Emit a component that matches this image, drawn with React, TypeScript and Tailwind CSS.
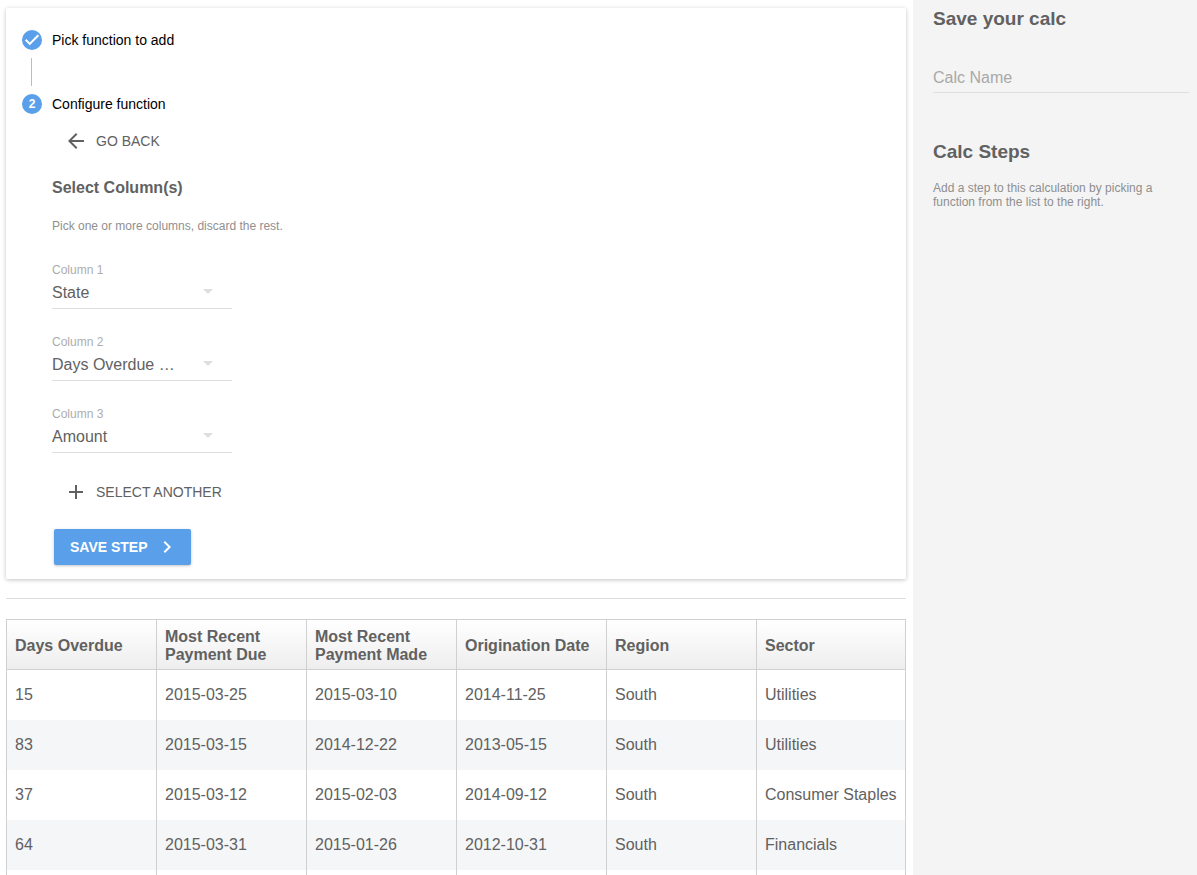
import { useState } from 'react';

const columnOptions = ['State', 'Days Overdue …', 'Amount', 'Region', 'Sector'];

const headers = [
  'Days Overdue',
  'Most Recent Payment Due',
  'Most Recent Payment Made',
  'Origination Date',
  'Region',
  'Sector',
];

const rows = [
  ['15', '2015-03-25', '2015-03-10', '2014-11-25', 'South', 'Utilities'],
  ['83', '2015-03-15', '2014-12-22', '2013-05-15', 'South', 'Utilities'],
  ['37', '2015-03-12', '2015-02-03', '2014-09-12', 'South', 'Consumer Staples'],
  ['64', '2015-03-31', '2015-01-26', '2012-10-31', 'South', 'Financials'],
  ['', '', '', '', '', ''],
];

function Icon({ path, className = 'size-6' }: { path: string; className?: string }) {
  return (
    <svg viewBox="0 0 24 24" fill="currentColor" className={className} aria-hidden="true">
      <path d={path} />
    </svg>
  );
}

interface ColumnSelectProps {
  index: number;
  value: string;
  onChange: (value: string) => void;
}

function ColumnSelect({ index, value, onChange }: ColumnSelectProps) {
  const id = `column-${index + 1}`;
  return (
    <div className="w-[180px]">
      <label htmlFor={id} className="block text-xs leading-4 text-[#adadad]">
        Column {index + 1}
      </label>
      <div className="relative mt-px">
        <select
          id={id}
          value={value}
          onChange={(e) => onChange(e.target.value)}
          className="block h-[30px] w-full appearance-none truncate border-b border-[#dedede] bg-transparent pt-0.5 pr-12 pb-[3px] text-base leading-6 text-[#616161] outline-none"
        >
          {columnOptions.map((option) => (
            <option key={option}>{option}</option>
          ))}
        </select>
        <Icon
          path="M7 10l5 5 5-5z"
          className="pointer-events-none absolute top-0 right-3 size-6 text-[#dedede]"
        />
      </div>
    </div>
  );
}

function StepConfig() {
  const [columns, setColumns] = useState(['State', 'Days Overdue …', 'Amount']);

  const updateColumn = (index: number, value: string) => {
    setColumns(columns.map((c, i) => (i === index ? value : c)));
  };

  return (
    <div className="flex flex-col items-start pl-[30px]">
      <button type="button" className="mt-[9px] flex h-9 items-center gap-2 px-3 text-sm text-[#616161]">
        <Icon path="M20 11H7.83l5.59-5.59L12 4l-8 8 8 8 1.41-1.41L7.83 13H20v-2z" />
        GO BACK
      </button>

      <h2 className="mt-[17px] text-base leading-6 font-bold text-[#616161]">Select Column(s)</h2>
      <p className="mt-[18px] text-xs leading-4 text-[#8f8f8f]">
        Pick one or more columns, discard the rest.
      </p>

      <div className="mt-7 flex flex-col gap-[25px]">
        {columns.map((column, i) => (
          <ColumnSelect key={i} index={i} value={column} onChange={(v) => updateColumn(i, v)} />
        ))}
      </div>

      <button
        type="button"
        onClick={() => setColumns([...columns, 'State'])}
        className="mt-[21px] flex h-9 items-center gap-2 px-3 text-sm text-[#616161]"
      >
        <Icon path="M19 13h-6v6h-2v-6H5v-2h6V5h2v6h6v2z" />
        SELECT ANOTHER
      </button>

      <button
        type="button"
        className="mt-[19px] ml-0.5 flex h-9 items-center gap-[7px] rounded-xs bg-[#5a9fe9] pr-3 pl-4 text-sm font-bold text-white shadow-[0_1px_3px_rgba(0,0,0,0.24)]"
      >
        SAVE STEP
        <Icon path="M10 6L8.59 7.41 13.17 12l-4.58 4.59L10 18l6-6z" />
      </button>
    </div>
  );
}

function DataTable() {
  return (
    <table className="w-full table-fixed border-separate border-spacing-0 text-left text-base text-[#616161]">
      <thead>
        <tr className="h-[51px]">
          {headers.map((header) => (
            <th
              key={header}
              scope="col"
              className="border-y border-l border-[#d0d0d0] bg-linear-to-b from-white to-[#eeeeee] px-2 pt-0.5 leading-[18px] font-bold last:border-r"
            >
              {header}
            </th>
          ))}
        </tr>
      </thead>
      <tbody>
        {rows.map((row, i) => (
          <tr key={i} className="h-[50px] even:bg-[#f5f6f8]">
            {row.map((cell, j) => (
              <td
                key={j}
                className="border-l border-[#d0d0d0] px-2 leading-[18px] whitespace-nowrap last:border-r"
              >
                {cell}
              </td>
            ))}
          </tr>
        ))}
      </tbody>
    </table>
  );
}

export default function App() {
  const [name, setName] = useState('');

  return (
    <div className="flex h-screen overflow-hidden bg-white font-['Liberation_Sans',Arial,sans-serif]">
      <main className="min-w-0 flex-1 overflow-hidden pt-2 pr-[7px] pl-1.5">
        <section className="rounded-xs px-4 pt-[22px] pb-3.5 shadow-[0_1px_4px_rgba(0,0,0,0.24)]">
          <div className="flex h-5 items-center gap-2.5 text-sm text-black">
            <span className="flex size-5 items-center justify-center rounded-full bg-[#5a9fe9] text-white">
              <Icon
                path="M9 15.2L4.5 10.7L2.6 12.6L9 19L21.4 6.6L19.5 4.7z"
                className="size-[18px]"
              />
            </span>
            Pick function to add
          </div>
          <div className="my-2 ml-[9px] h-7 w-px bg-[#bdbdbd]" />
          <div className="flex h-5 items-center gap-2.5 text-sm text-black">
            <span className="flex size-5 items-center justify-center rounded-full bg-[#5a9fe9] text-xs font-bold text-white">
              2
            </span>
            Configure function
          </div>
          <StepConfig />
        </section>

        <hr className="mt-[19px] mb-5 border-[#dedede]" />

        <DataTable />
      </main>

      <aside className="w-[284px] shrink-0 bg-[#f4f4f4] pt-[7px] pr-2 pl-5 text-[#616161]">
        <h2 className="text-[19px] leading-6 font-bold">Save your calc</h2>
        <input
          type="text"
          aria-label="Calc Name"
          placeholder="Calc Name"
          value={name}
          onChange={(e) => setName(e.target.value)}
          className="mt-[34px] block h-7 w-full border-b border-[#dedede] bg-transparent pb-0.5 text-base leading-6 outline-none placeholder:text-[#a8a8a8]"
        />
        <h2 className="mt-[47px] text-[19px] leading-6 font-bold">Calc Steps</h2>
        <p className="mt-[17px] text-xs leading-[14px] text-[#8f8f8f]">
          Add a step to this calculation by picking a function from the list to the right.
        </p>
      </aside>
    </div>
  );
}
